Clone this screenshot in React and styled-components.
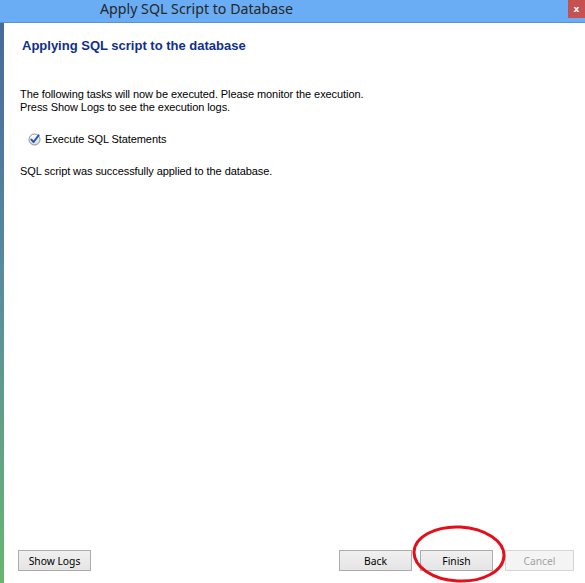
import React from 'react';
import styled, { createGlobalStyle } from 'styled-components';

const Global = createGlobalStyle`
  html, body { margin: 0; padding: 0; background: #fff; }
  body { font-family: "Liberation Sans", Arial, sans-serif; }
`;

const Window = styled.div`
  position: relative;
  width: 585px;
  height: 583px;
  display: flex;
  flex-direction: column;
  overflow: hidden;
  background: #fff;
`;

const TitleBar = styled.div`
  height: 22px;
  flex: none;
  display: flex;
  align-items: center;
  justify-content: space-between;
  background: #6aadf5;
  border-bottom: 1px solid #5a93cf;
`;

const Title = styled.div`
  padding-left: 100px;
  font-family: "Noto Sans", "Open Sans", sans-serif;
  font-size: 14.2px;
  color: #262626;
  line-height: 22px;
  margin-top: -4px;
`;

const CloseButton = styled.div`
  width: 17px;
  height: 18px;
  align-self: flex-start;
  background: #c75050;
  color: #fff;
  font-family: "DejaVu Sans", sans-serif;
  font-weight: bold;
  font-size: 9px;
  display: flex;
  align-items: center;
  justify-content: center;
`;

const Body = styled.div`
  flex: 1;
  display: flex;
  min-height: 0;
`;

const SideStrip = styled.div`
  width: 4px;
  flex: none;
  background: linear-gradient(#466a9b, #5a8aa0 45%, #66b86e);
`;

const Content = styled.div`
  flex: 1;
  display: flex;
  flex-direction: column;
  padding: 15px 11px 12px 14px;
`;

const Heading = styled.h1`
  margin: 0 0 0 4px;
  font-family: "Liberation Sans", Arial, sans-serif;
  font-weight: bold;
  font-size: 13px;
  line-height: 16px;
  color: #0f2f8c;
`;

const Text = styled.p`
  margin: ${({ $top }) => $top}px 0 0 2px;
  font-size: 11px;
  line-height: 13px;
  letter-spacing: -0.08px;
  color: #000;
`;

const TaskRow = styled.div`
  margin: 17px 0 0 10px;
  display: flex;
  align-items: center;
  gap: 4px;
  height: 16px;
  font-size: 11px;
  letter-spacing: -0.08px;
  color: #000;
`;

const Spacer = styled.div`
  flex: 1;
`;

const Footer = styled.div`
  display: flex;
  align-items: center;
`;

const Button = styled.button`
  width: ${({ $w }) => $w || 73}px;
  height: 21px;
  margin-left: ${({ $gap }) => $gap || 0}px;
  padding: 0;
  font-family: "Noto Sans", "Open Sans", sans-serif;
  font-size: 10.3px;
  color: ${({ disabled }) => (disabled ? '#a3a3a3' : '#000')};
  border: 1px solid ${({ disabled }) => (disabled ? '#d5d5d5' : '#acacac')};
  background: ${({ disabled }) =>
    disabled ? '#f4f4f4' : 'linear-gradient(#f0f0f0, #e5e5e5)'};
`;

const Highlight = styled.svg`
  position: absolute;
  left: 410px;
  top: 524px;
  pointer-events: none;
`;

const CheckIcon = () => (
  <svg width="13" height="13" viewBox="0 0 13 13">
    <defs>
      <linearGradient id="cb" x1="0" y1="0" x2="0" y2="1">
        <stop offset="0" stopColor="#ffffff" />
        <stop offset="1" stopColor="#dcdcdc" />
      </linearGradient>
    </defs>
    <circle cx="6.5" cy="6.5" r="5.5" fill="url(#cb)" stroke="#8c8c8c" strokeWidth="1" />
    <path d="M3.4 6.6 L5.6 9 L10.6 2.4" fill="none" stroke="#2756b5" strokeWidth="2" strokeLinecap="round" strokeLinejoin="round" />
  </svg>
);

export default function App() {
  return (
    <>
      <Global />
      <Window>
        <TitleBar>
          <Title>Apply SQL Script to Database</Title>
          <CloseButton>x</CloseButton>
        </TitleBar>
        <Body>
          <SideStrip />
          <Content>
            <Heading>Applying SQL script to the database</Heading>
            <Text $top={34}>
              The following tasks will now be executed. Please monitor the execution.
              <br />
              Press Show Logs to see the execution logs.
            </Text>
            <TaskRow>
              <CheckIcon />
              <span>Execute SQL Statements</span>
            </TaskRow>
            <Text $top={18}>SQL script was successfully applied to the database.</Text>
            <Spacer />
            <Footer>
              <Button>Show Logs</Button>
              <Spacer />
              <Button>Back</Button>
              <Button $gap={8}>Finish</Button>
              <Button $gap={12} $w={69} disabled>Cancel</Button>
            </Footer>
          </Content>
        </Body>
        <Highlight width="100" height="60" viewBox="0 0 100 60">
          <ellipse cx="49" cy="30" rx="45" ry="27" fill="none" stroke="#e3101c" strokeWidth="3" transform="rotate(3 49 30)" />
        </Highlight>
      </Window>
    </>
  );
}
